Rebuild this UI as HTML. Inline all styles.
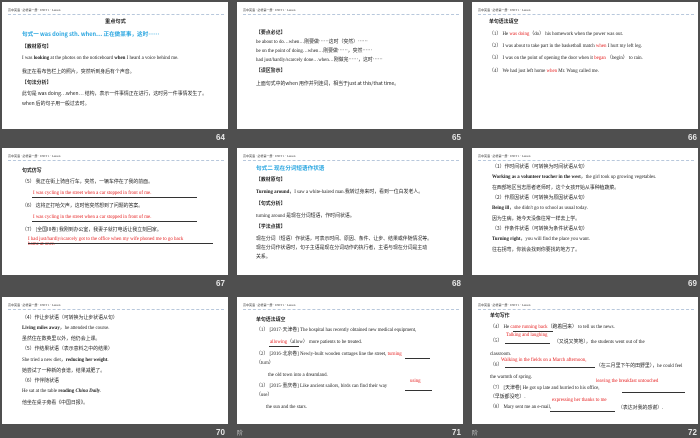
<!DOCTYPE html>
<html><head><meta charset="utf-8"><style>
*{margin:0;padding:0;box-sizing:border-box}
body{width:700px;height:438px;background:#4f4f4f;position:relative;overflow:hidden;font-family:"Liberation Serif","Noto Sans CJK SC",serif;color:#222}
.s{position:absolute;width:226px;height:127px;background:#fff;overflow:hidden}
.s .h{position:absolute;left:6px;top:6px;font-size:3px;color:#333;white-space:nowrap}
.s .d{position:absolute;left:6px;right:4px;top:12px;border-top:1px dashed #b8c8dc}
.s p{position:absolute;white-space:nowrap;font-size:4.9px;line-height:6px}
.b{font-weight:bold}
.c{font-family:"Noto Sans CJK SC",sans-serif}
.bl{color:#2aa6e0;font-weight:bold;font-size:5.6px!important}
.r{color:#e62020}
.u{position:absolute;border-top:0.7px solid #333}
.n{position:absolute;color:#e8e8e8;font:bold 8px "Liberation Sans",sans-serif}
</style></head><body>

<div class="s" style="left:2px;top:2px">
<div class="h">高中英语 · 必修第一册 · UNIT 1 · Lesson</div><div class="d"></div>
<p class="b c" style="left:103px;top:17px;font-size:5.2px">重点句式</p>
<p class="bl c" style="left:20px;top:29px">句式一 was doing sth. when… 正在做某事，这时……</p>
<p class="b c" style="left:20px;top:42px">【教材原句】</p>
<p style="left:20px;top:54px">I was <b>looking</b> at the photos on the noticeboard <b>when</b> I heard a voice behind me.</p>
<p class="c" style="left:20px;top:67px">我正在看布告栏上的照片，突然听到身后有个声音。</p>
<p class="b c" style="left:20px;top:78px">【句法分析】</p>
<p class="c" style="left:20px;top:89px">此句是 was doing…when… 结构，表示一件事情正在进行，这时另一件事情发生了。</p>
<p class="c" style="left:20px;top:99px">when 后的句子用一般过去时。</p>
</div>
<div class="n" style="left:216px;top:133px">64</div>

<div class="s" style="left:237px;top:2px">
<div class="h">高中英语 · 必修第一册 · UNIT 1 · Lesson</div><div class="d"></div>
<p class="b c" style="left:19px;top:28px">【要点必记】</p>
<p style="left:19px;top:37px">be about to do…when…<span class="c">刚要做……这时（突然）……</span></p>
<p style="left:19px;top:46px">be on the point of doing…when…<span class="c">刚要做……，突然……</span></p>
<p style="left:19px;top:55px">had just/hardly/scarcely done…when…<span class="c">刚做完……，这时……</span></p>
<p class="b c" style="left:19px;top:66px">【误区警示】</p>
<p class="c" style="left:19px;top:79px">上面句式中的when 用作并列连词，相当于just at this/that time。</p>
</div>
<div class="n" style="left:452px;top:133px">65</div>

<div class="s" style="left:472px;top:2px">
<div class="h">高中英语 · 必修第一册 · UNIT 1 · Lesson</div><div class="d"></div>
<p class="b c" style="left:17px;top:17px">单句语法填空</p>
<p style="left:17px;top:30px">（1） He <span class="r">was doing</span>（do） his homework when the power was out.</p>
<p style="left:17px;top:42px">（2） I was about to take part in the basketball match <span class="r">when</span> I hurt my left leg.</p>
<p style="left:17px;top:54px">（3） I was on the point of opening the door when it <span class="r">began</span> （begin） to rain.</p>
<p style="left:17px;top:67px">（4） We had just left home <span class="r">when</span> Mr. Wang called me.</p>
</div>
<div class="n" style="left:688px;top:133px">66</div>

<div class="s" style="left:2px;top:148px">
<div class="h">高中英语 · 必修第一册 · UNIT 1 · Lesson</div><div class="d"></div>
<p class="b c" style="left:20px;top:20px">句式仿写</p>
<p class="c" style="left:20px;top:31px">（5） 我正在街上骑自行车，突然，一辆车停在了我的前面。</p>
<p class="r" style="left:31px;top:43px">I was cycling in the street when a car stopped in front of me.</p>
<div class="u" style="left:30px;top:49px;width:165px"></div>
<p class="c" style="left:20px;top:55px">（6） 这将正打哈欠声，这时他突然想到了问题的答案。</p>
<p class="r" style="left:31px;top:67px">I was cycling in the street when a car stopped in front of me.</p>
<div class="u" style="left:30px;top:73px;width:165px"></div>
<p class="c" style="left:20px;top:79px">（7） [全国III卷] 我刚到办公室，我妻子就打电话让我立刻回家。</p>
<p class="r" style="left:26px;top:89px;line-height:5px">I had just/hardly/scarcely got to the office when my wife phoned me to go back<br>home at once.</p>
<div class="u" style="left:26px;top:95px;width:185px"></div>
</div>
<div class="n" style="left:216px;top:279px">67</div>

<div class="s" style="left:237px;top:148px">
<div class="h">高中英语 · 必修第一册 · UNIT 1 · Lesson</div><div class="d"></div>
<p class="bl c" style="left:19px;top:17px">句式二 现在分词短语作状语</p>
<p class="b c" style="left:19px;top:29px">【教材原句】</p>
<p style="left:19px;top:41px"><b>Turning around</b>，I saw a white-haired man.<span class="c">我转过身来时，看到一位白发老人。</span></p>
<p class="b c" style="left:19px;top:53px">【句式分析】</p>
<p style="left:19px;top:65px">turning around <span class="c">是现在分词短语，作时间状语。</span></p>
<p class="b c" style="left:19px;top:76px">【学法点拨】</p>
<p class="c" style="left:19px;top:88px">现在分词（短语）作状语，可表示时间、原因、条件、让步、结果或伴随情况等。</p>
<p class="c" style="left:19px;top:97px">现在分词作状语时，句子主语是现在分词动作的执行者，主语与现在分词是主动</p>
<p class="c" style="left:19px;top:106px">关系。</p>
</div>
<div class="n" style="left:452px;top:279px">68</div>

<div class="s" style="left:472px;top:148px">
<div class="h">高中英语 · 必修第一册 · UNIT 1 · Lesson</div><div class="d"></div>
<p class="c" style="left:20px;top:16px">（1）作时间状语（可转换为时间状语从句）</p>
<p style="left:20px;top:27px"><b>Working as a volunteer teacher in the west</b>，the girl took up growing vegetables.</p>
<p class="c" style="left:20px;top:37px">在西部地区当志愿者老师时，这个女孩开始从事种植蔬菜。</p>
<p class="c" style="left:20px;top:47px">（2）作原因状语（可转换为原因状语从句）</p>
<p style="left:20px;top:58px"><b>Being ill</b>，she didn't go to school as usual today.</p>
<p class="c" style="left:20px;top:68px">因为生病，她今天没像往常一样去上学。</p>
<p class="c" style="left:20px;top:78px">（3）作条件状语（可转换为条件状语从句）</p>
<p style="left:20px;top:89px"><b>Turning right</b>，you will find the place you want.</p>
<p class="c" style="left:20px;top:99px">往右拐弯，你就会找到你要找的地方了。</p>
</div>
<div class="n" style="left:688px;top:279px">69</div>

<div class="s" style="left:2px;top:297px">
<div class="h">高中英语 · 必修第一册 · UNIT 1 · Lesson</div><div class="d"></div>
<p class="c" style="left:20px;top:18px">（4）作让步状语（可转换为让步状语从句）</p>
<p style="left:20px;top:29px"><b>Living miles away</b>，he attended the course.</p>
<p class="c" style="left:20px;top:39px">虽然住在数英里以外，他仍会上课。</p>
<p class="c" style="left:20px;top:49px">（5）作结果状语（表示意料之中的结果）</p>
<p style="left:20px;top:61px">She tried a new diet，<b>reducing her weight</b>.</p>
<p class="c" style="left:20px;top:71px">她尝试了一种新的食谱，结果减肥了。</p>
<p class="c" style="left:20px;top:81px">（6）作伴随状语</p>
<p style="left:20px;top:92px">He sat at the table <b>reading <i>China Daily</i></b>.</p>
<p class="c" style="left:20px;top:103px">他坐在桌子旁看《中国日报》。</p>
</div>
<div class="n" style="left:216px;top:428px">70</div>

<div class="s" style="left:237px;top:297px">
<div class="h">高中英语 · 必修第一册 · UNIT 1 · Lesson</div><div class="d"></div>
<p class="b c" style="left:19px;top:20px">单句语法填空</p>
<p style="left:19px;top:31px">（1） [2017·天津卷] The hospital has recently obtained new medical equipment,</p>
<p style="left:33px;top:43px"><span class="r">allowing</span>（allow） more patients to be treated.</p>
<div class="u" style="left:32px;top:49px;width:30px"></div>
<p style="left:19px;top:55px">（2） [2016·北京卷] Newly-built wooden cottages line the street, <span class="r">turning</span></p>
<div class="u" style="left:168px;top:61px;width:25px"></div>
<p style="left:19px;top:64px">（turn）</p>
<p style="left:31px;top:76px">the old town into a dreamland.</p>
<p class="r" style="left:173px;top:82px">using</p>
<p style="left:19px;top:87px">（3） [2015·重庆卷] Like ancient sailors, birds can find their way</p>
<div class="u" style="left:168px;top:93px;width:27px"></div>
<p style="left:19px;top:96px">（use）</p>
<p style="left:29px;top:108px">the sun and the stars.</p>
</div>
<div class="n" style="left:452px;top:428px">71</div>

<div class="s" style="left:472px;top:297px">
<div class="h">高中英语 · 必修第一册 · UNIT 1 · Lesson</div><div class="d"></div>
<p class="b c" style="left:18px;top:16px">单句写作</p>
<p style="left:18px;top:28px">（4） He <span class="r">came running back</span>（跑着回来） to tell us the news.</p>
<div class="u" style="left:41px;top:34px;width:40px"></div>
<p class="r" style="left:34px;top:36px">Talking and laughing</p>
<p style="left:18px;top:42px">（5）</p>
<div class="u" style="left:33px;top:46px;width:45px"></div>
<p style="left:82px;top:42px"><span class="c">（又说又笑地）</span>，the students went out of the</p>
<p style="left:18px;top:55px">classroom.</p>
<p class="r" style="left:29px;top:61px">Walking in the fields on a March afternoon,</p>
<p style="left:18px;top:66px">（6）</p>
<div class="u" style="left:33px;top:70px;width:90px"></div>
<p style="left:124px;top:66px"><span class="c">（在三月里下午的田野里）</span>，he could feel</p>
<p style="left:18px;top:78px">the warmth of spring.</p>
<p class="r" style="left:124px;top:82px">leaving the breakfast untouched</p>
<p style="left:18px;top:89px">（7） [天津卷] He got up late and hurried to his office,</p>
<div class="u" style="left:150px;top:95px;width:63px"></div>
<p class="c" style="left:18px;top:97px">（早饭都没吃）.</p>
<p class="r" style="left:80px;top:101px">expressing her thanks to me</p>
<p style="left:18px;top:108px">（8） Mary sent me an e-mail,</p>
<div class="u" style="left:78px;top:114px;width:65px"></div>
<p class="c" style="left:146px;top:108px">（表达对我的感谢）.</p>
</div>
<div class="n" style="left:688px;top:428px">72</div>
<div style="position:absolute;left:472px;top:428px;color:#ccc;font:6px 'Noto Sans CJK SC',sans-serif">阶</div>
<div style="position:absolute;left:237px;top:428px;color:#ccc;font:6px 'Noto Sans CJK SC',sans-serif">阶</div>
</body></html>
